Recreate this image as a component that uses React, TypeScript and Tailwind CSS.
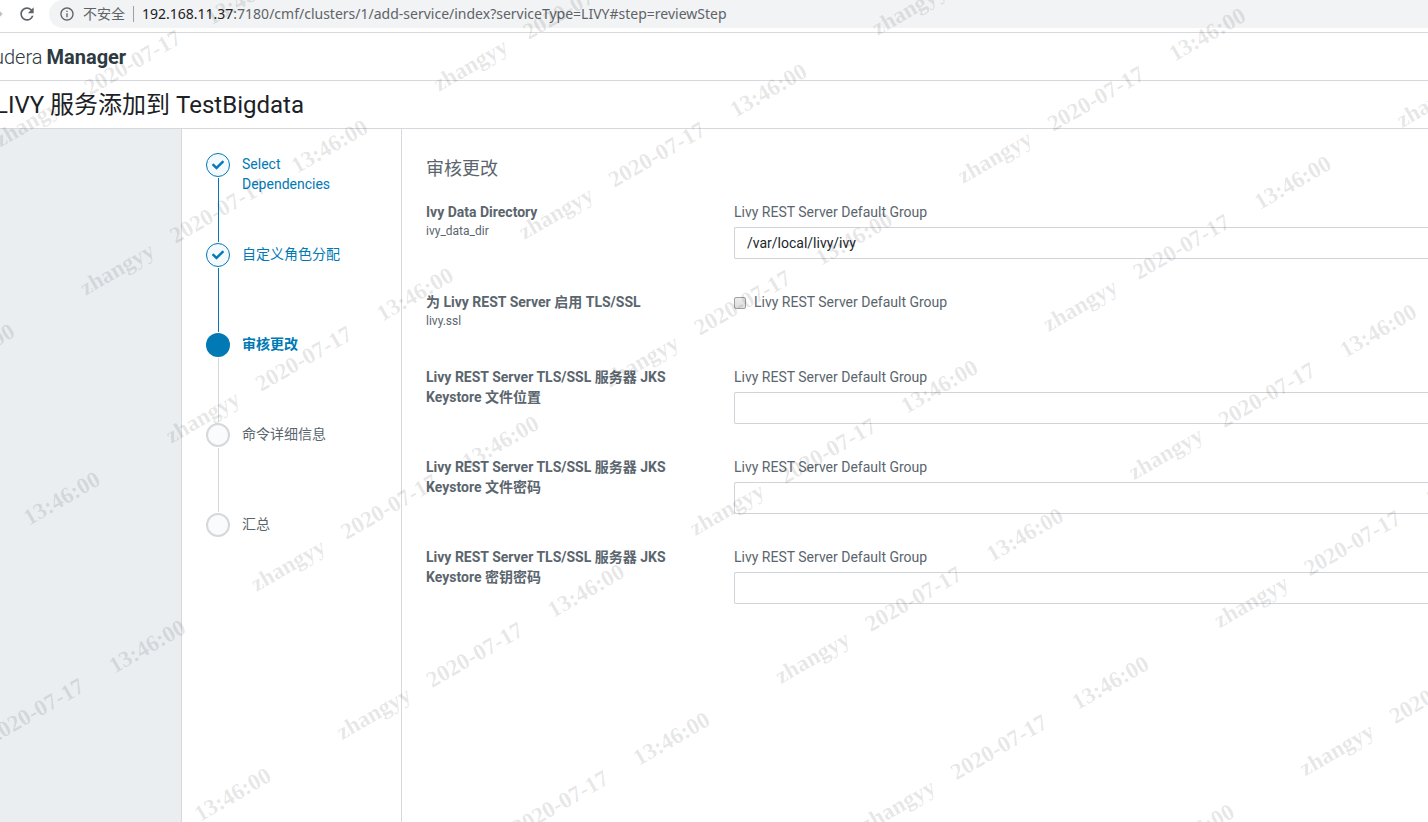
import { FaCheck } from 'react-icons/fa';
import { MdInfoOutline, MdRefresh, MdArrowForward } from 'react-icons/md';

type StepState = 'done' | 'current' | 'pending';

const steps: { label: string; state: StepState }[] = [
  { label: 'Select Dependencies', state: 'done' },
  { label: '自定义角色分配', state: 'done' },
  { label: '审核更改', state: 'current' },
  { label: '命令详细信息', state: 'pending' },
  { label: '汇总', state: 'pending' },
];

const circleStyles: Record<StepState, string> = {
  done: 'border border-[#0079b5] bg-[#f4f9fd] text-[#0079b5]',
  current: 'bg-[#0079b5]',
  pending: 'border-2 border-[#d5d8dc] bg-[#f9fbfd]',
};

const labelStyles: Record<StepState, string> = {
  done: 'text-[#0079b5]',
  current: 'font-bold text-[#0079b5]',
  pending: 'text-[#5a656d]',
};

interface Field {
  id: string;
  title: string;
  property?: string;
  kind: 'text' | 'checkbox';
  value?: string;
}

const fields: Field[] = [
  { id: 'ivy_data_dir', title: 'Ivy Data Directory', property: 'ivy_data_dir', kind: 'text', value: '/var/local/livy/ivy' },
  { id: 'livy_ssl', title: '为 Livy REST Server 启用 TLS/SSL', property: 'livy.ssl', kind: 'checkbox' },
  { id: 'keystore_file', title: 'Livy REST Server TLS/SSL 服务器 JKS Keystore 文件位置', kind: 'text' },
  { id: 'keystore_password', title: 'Livy REST Server TLS/SSL 服务器 JKS Keystore 文件密码', kind: 'text' },
  { id: 'key_password', title: 'Livy REST Server TLS/SSL 服务器 JKS Keystore 密钥密码', kind: 'text' },
];

const GROUP = 'Livy REST Server Default Group';

function BrowserBar() {
  return (
    <div className="flex h-[33px] items-start border-b border-[#d8d9de] text-[#5f6368]">
      <button type="button" aria-label="前进" className="-ml-[14px] flex h-7 w-5 items-center text-[#bdc1c6]">
        <MdArrowForward className="size-5" />
      </button>
      <button type="button" aria-label="重新加载" className="ml-[10px] flex h-7 w-[33px] items-center">
        <MdRefresh className="ml-px size-5" />
      </button>
      <div className="flex h-7 min-w-0 flex-1 items-center rounded-l-full bg-[#f1f3f4] pl-[10px] font-['Noto_Sans','Noto_Sans_CJK_SC',sans-serif] text-sm">
        <MdInfoOutline className="size-4 shrink-0" />
        <span className="ml-2 shrink-0">不安全</span>
        <span className="mx-2 h-4 w-px shrink-0 bg-[#9aa0a6]" />
        <span className="truncate">
          <span className="text-[#202124]">192.168.11.37</span>
          :7180/cmf/clusters/1/add-service/index?serviceType=LIVY#step=reviewStep
        </span>
      </div>
    </div>
  );
}

function StepList() {
  return (
    <ol className="w-[220px] shrink-0 border-r border-[#d5d8dc] pt-6 pl-6">
      {steps.map((step, i) => (
        <li key={step.label} className="flex gap-3">
          <div className="w-6 shrink-0">
            <div className={`flex size-6 items-center justify-center rounded-full ${circleStyles[step.state]}`}>
              {step.state === 'done' && <FaCheck className="size-3" />}
            </div>
            {i < steps.length - 1 && (
              <div
                className={`my-px ml-3 h-16 w-px ${step.state === 'done' ? 'bg-[#0079b5]' : 'bg-[#d5d8dc]'}`}
              />
            )}
          </div>
          <div className={`mt-px w-28 leading-5 ${labelStyles[step.state]}`}>{step.label}</div>
        </li>
      ))}
    </ol>
  );
}

function FieldRow({ field }: { field: Field }) {
  return (
    <div className="flex pb-[33px]">
      <div className="w-[308px] shrink-0 pr-12">
        <div className="font-bold leading-5">{field.title}</div>
        {field.property && <div className="pb-1 text-xs leading-[18px]">{field.property}</div>}
      </div>
      <div className="min-w-0 flex-1">
        {field.kind === 'text' ? (
          <>
            <label htmlFor={field.id} className="block leading-5">
              {GROUP}
            </label>
            <input
              id={field.id}
              type="text"
              defaultValue={field.value}
              className="mt-[5px] block h-8 w-full rounded-l-xs border border-r-0 border-[#d0d3d8] bg-white px-3 text-[#20262b]"
            />
          </>
        ) : (
          <label className="flex items-center gap-2 leading-5">
            <input
              type="checkbox"
              className="mt-px size-3 appearance-none rounded-xs border border-[#a0a0a0] bg-linear-to-b from-[#ededed] to-[#dcdcdc]"
            />
            {GROUP}
          </label>
        )}
      </div>
    </div>
  );
}

function Watermark() {
  return (
    <div aria-hidden="true" className="pointer-events-none absolute inset-0 overflow-hidden">
      <div className="w-[2040px] origin-top-left -rotate-30">
        <div className="-ml-[482px] grid w-[2040px] grid-cols-5 pt-[109px] font-['Liberation_Serif',serif] text-[23px] leading-6 font-bold text-black/10">
          {Array.from({ length: 45 }, (_, i) => (
            <div key={i} className="flex h-[171px] whitespace-nowrap">
              <span className="w-[104px]">zhangyy</span>
              <span className="w-[140px]">2020-07-17</span>
              <span>13:46:00</span>
            </div>
          ))}
        </div>
      </div>
    </div>
  );
}

export default function App() {
  return (
    <div className="relative flex min-h-screen flex-col overflow-hidden bg-white font-[Roboto,'Noto_Sans_CJK_SC',sans-serif] text-sm text-[#5a656d]">
      <BrowserBar />
      <header className="flex h-12 items-center border-b border-[#d5d8dc] text-xl text-[#2d3a42]">
        <div className="-ml-[7px] flex gap-1 whitespace-nowrap">
          <span className="font-light">udera</span>
          <span className="font-bold">Manager</span>
        </div>
      </header>
      <div className="flex h-12 items-center border-b border-[#d5d8dc]">
        <h1 className="-ml-[5px] text-2xl whitespace-nowrap text-[#1b2126]">LIVY 服务添加到 TestBigdata</h1>
      </div>
      <div className="flex flex-1">
        <aside className="w-[182px] shrink-0 border-r border-[#d5d8dc] bg-[#eaeef1]" />
        <StepList />
        <main className="min-w-0 flex-1 pt-6 pl-6">
          <h2 className="mb-[17px] text-lg leading-8">审核更改</h2>
          <form>
            {fields.map((field) => (
              <FieldRow key={field.id} field={field} />
            ))}
          </form>
        </main>
      </div>
      <Watermark />
    </div>
  );
}
